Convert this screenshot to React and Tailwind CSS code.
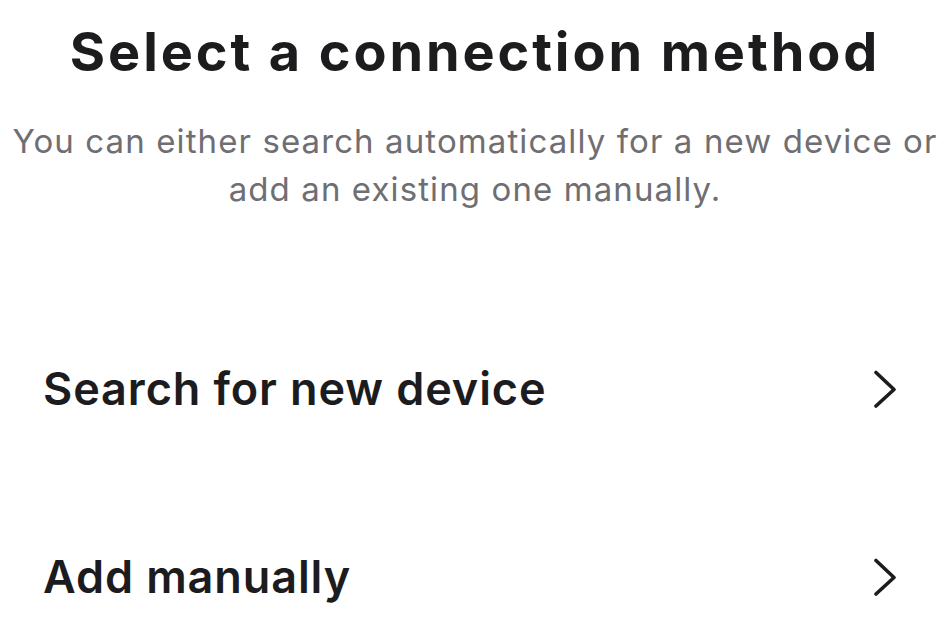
import React from "react";

function Chevron() {
  return (
    <svg width="24" height="38" viewBox="0 0 24 38" fill="none">
      <path d="M3 2.5 L21 19.5 L3 36" stroke="#1c1c1e" strokeWidth="3.6" strokeLinecap="round" strokeLinejoin="round" />
    </svg>
  );
}

function Row({ label }) {
  return (
    <div className="flex items-center justify-between h-[54px] pl-[43px] pr-[53px]">
      <span className="text-[45px] leading-[54px] font-semibold tracking-[0.9px] text-[#1c1c1e]">{label}</span>
      <Chevron />
    </div>
  );
}

export default function App() {
  return (
    <div className="w-[950px] h-[620px] bg-white overflow-hidden" style={{ fontFamily: "Inter, 'Noto Sans', sans-serif" }}>
      <h1 className="text-center text-[54px] font-bold leading-[54px] tracking-[2.9px] text-[#1c1c1e] pt-[25px] whitespace-nowrap">
        Select a connection method
      </h1>
      <p className="text-center text-[33px] leading-[48px] tracking-[1.1px] text-[#6e6e73] mt-[38px] whitespace-nowrap">
        You can either search automatically for a new device or
        <br />
        add an existing one manually.
      </p>
      <div className="mt-[149px] flex flex-col gap-[134px]">
        <Row label="Search for new device" />
        <Row label="Add manually" />
      </div>
    </div>
  );
}
